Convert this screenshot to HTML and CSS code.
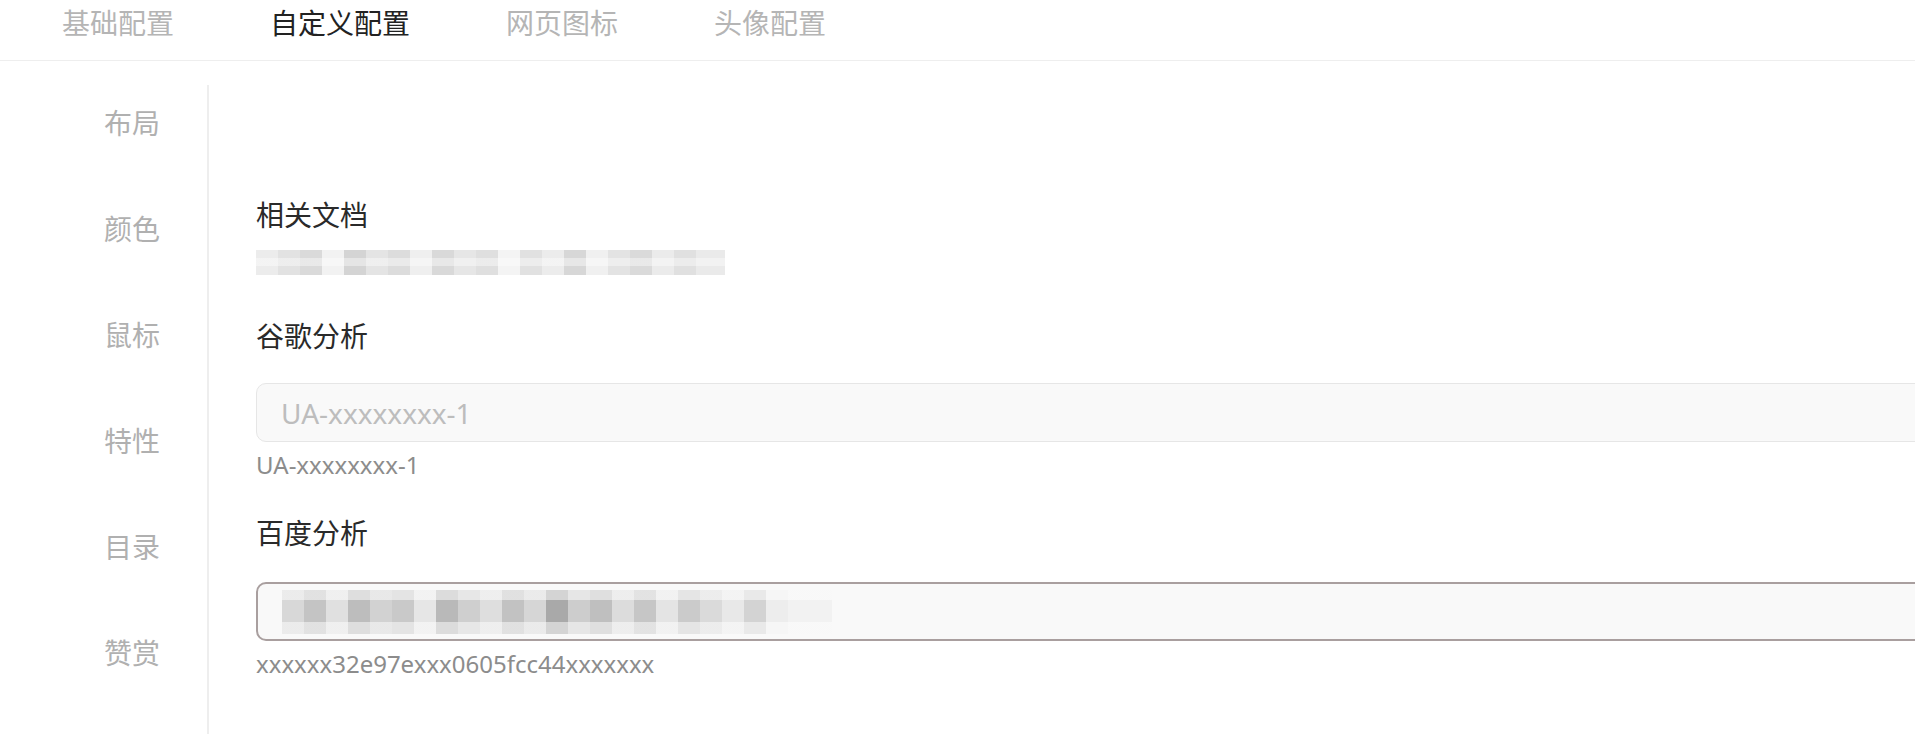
FILE: index.html
```html
<!DOCTYPE html>
<html lang="zh-CN">
<head>
    <meta charset="UTF-8">
    <meta name="viewport" content="width=device-width, initial-scale=1.0">
    <title>自定义配置</title>
    <link rel="stylesheet" href="styles.css">
</head>
<body>
    <div class="tabs">
        <div class="tab">基础配置</div>
        <div class="tab active">自定义配置</div>
        <div class="tab">网页图标</div>
        <div class="tab">头像配置</div>
    </div>

    <div class="main">
        <div class="sidebar">
            <div class="side-item">布局</div>
            <div class="side-item">颜色</div>
            <div class="side-item">鼠标</div>
            <div class="side-item">特性</div>
            <div class="side-item">目录</div>
            <div class="side-item">赞赏</div>
        </div>

        <div class="content">
            <div class="field docs">
                <div class="label">相关文档</div>
                <div class="blur blur-link"></div>
            </div>

            <div class="field">
                <div class="label">谷歌分析</div>
                <input type="text" class="input" placeholder="UA-xxxxxxxx-1">
                <div class="hint">UA-xxxxxxxx-1</div>
            </div>

            <div class="field">
                <div class="label">百度分析</div>
                <div class="input focused">
                    <div class="blur blur-value"></div>
                </div>
                <div class="hint">xxxxxx32e97exxx0605fcc44xxxxxxx</div>
            </div>
        </div>
    </div>
</body>
</html>
```

FILE: styles.css
```css
html, body {
    overflow: hidden;
}
body {
    margin: 0;
    font-family: "Noto Sans", "Noto Sans CJK SC", sans-serif;
    background-color: #fff;
    color: #333;
}
.tabs {
    display: flex;
    height: 60px;
    padding-left: 14px;
    border-bottom: 1px solid #eee;
}
.tab {
    padding: 0 48px;
    font-size: 28px;
    line-height: 46px;
    color: #b5b5b5;
    white-space: nowrap;
}
.tab.active {
    color: #222;
}
.main {
    display: flex;
    margin-top: 24px;
}
.sidebar {
    width: 160px;
    flex-shrink: 0;
    padding: 17px 47px 60px 0;
    border-right: 2px solid #eee;
    display: flex;
    flex-direction: column;
    gap: 64px;
}
.side-item {
    text-align: right;
    font-size: 28px;
    line-height: 42px;
    color: #b0b0b0;
}
.content {
    padding: 109px 0 0 47px;
}
.field {
    margin-bottom: 30px;
}
.field.docs {
    margin-bottom: 40px;
}
.label {
    font-size: 28px;
    line-height: 42px;
    color: #2a2a2a;
}
.input {
    display: block;
    box-sizing: border-box;
    width: 1700px;
    height: 59px;
    margin-top: 26px;
    padding: 0 24px;
    font-family: inherit;
    font-size: 28px;
    color: #555;
    background-color: #f9f9f9;
    border: 1px solid #e6e6e6;
    border-radius: 10px;
    outline: none;
}
.input::placeholder {
    color: #bdbdbd;
}
.input.focused {
    margin-top: 28px;
    border: 2px solid #a99f9f;
    padding-top: 6px;
}
.hint {
    margin-top: 6px;
    font-size: 24px;
    line-height: 34px;
    color: #8c8c8c;
}
.blur {
    height: 25px;
}
.blur-link {
    width: 469px;
    margin-top: 14px;
    background:
        linear-gradient(180deg, transparent 0 8px, rgba(255,255,255,0.4) 8px 16px, transparent 16px),
        linear-gradient(90deg,
            #ececec 0 22px, #e2e2e2 22px 44px, #dadada 44px 66px, #f2f2f2 66px 88px,
            #d4d4d4 88px 110px, #e4e4e4 110px 132px, #dcdcdc 132px 154px, #efefef 154px 176px,
            #d9d9d9 176px 198px, #e6e6e6 198px 220px, #dfdfdf 220px 242px, #f4f4f4 242px 264px,
            #e1e1e1 264px 286px, #ececec 286px 308px, #d7d7d7 308px 330px, #f0f0f0 330px 352px,
            #e3e3e3 352px 374px, #dadada 374px 396px, #ebebeb 396px 418px, #e0e0e0 418px 440px,
            #eaeaea 440px 469px);
}
.blur-value {
    width: 550px;
    height: 44px;
    background:
        linear-gradient(180deg, rgba(255,255,255,0.5) 0 10px, transparent 10px 32px, rgba(255,255,255,0.5) 32px),
        linear-gradient(90deg,
            #d8d8d8 0 22px, #c4c4c4 22px 44px, #e0e0e0 44px 66px, #bdbdbd 66px 88px,
            #d2d2d2 88px 110px, #c9c9c9 110px 132px, #e6e6e6 132px 154px, #b9b9b9 154px 176px,
            #cfcfcf 176px 198px, #dedede 198px 220px, #c2c2c2 220px 242px, #d6d6d6 242px 264px,
            #a9a9a9 264px 286px, #cdcdcd 286px 308px, #bfbfbf 308px 330px, #dcdcdc 330px 352px,
            #c6c6c6 352px 374px, #e4e4e4 374px 396px, #cbcbcb 396px 418px, #dadada 418px 440px,
            #e8e8e8 440px 462px, #d3d3d3 462px 484px, #ededed 484px 506px, #f2f2f2 506px 550px);
}
```
